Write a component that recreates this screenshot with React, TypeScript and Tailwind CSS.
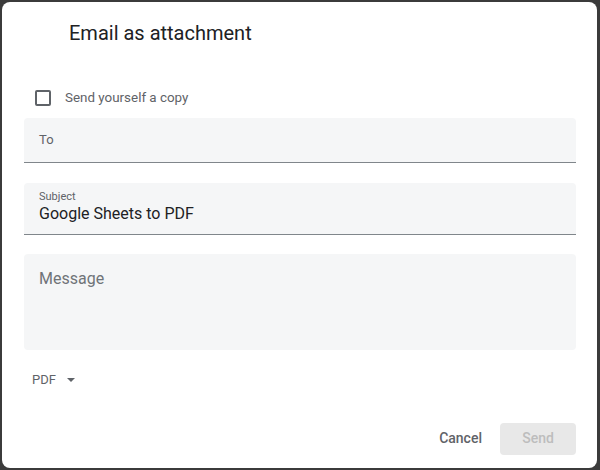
export default function App() {
  return (
    <div
      className="w-[600px] h-[470px] bg-[#3b3b3b] pt-[2px] pl-[2px] pr-[3px] pb-[2px]"
      style={{ fontFamily: "Roboto, 'Liberation Sans', sans-serif" }}
    >
      <div className="h-full bg-white rounded-[8px] pl-[22px] pr-[21px] flex flex-col">
        {/* Title */}
        <h2 className="mt-[19px] ml-[45px] text-[20px] leading-[24px] text-[#202124]">
          Email as attachment
        </h2>

        {/* Copy checkbox */}
        <label className="mt-[43px] ml-[11px] h-[20px] flex items-center gap-[14px]">
          <span className="w-[16px] h-[16px] border-2 border-[#5f6368] rounded-[2px]" />
          <span className="text-[13.4px] text-[#5f6368]">Send yourself a copy</span>
        </label>

        {/* To */}
        <div className="mt-[10px] h-[45px] bg-[#f5f6f7] rounded-t-[4px] border-b border-[#80868b] flex items-center px-[15px]">
          <span className="text-[13px] text-[#5f6368]">To</span>
        </div>

        {/* Subject */}
        <div className="mt-[20px] h-[52px] bg-[#f5f6f7] rounded-t-[4px] border-b border-[#80868b] px-[15px] pt-[7px]">
          <div className="text-[11px] leading-[14px] text-[#5f6368]">Subject</div>
          <div className="text-[16px] leading-[20px] text-[#202124]">Google Sheets to PDF</div>
        </div>

        {/* Message */}
        <div className="mt-[19px] h-[96px] bg-[#f5f6f7] rounded-[4px] px-[15px] pt-[13px]">
          <span className="text-[16px] leading-[20px] text-[#6f7378]">Message</span>
        </div>

        {/* Format */}
        <div className="mt-[20px] ml-[8px] h-[20px] flex items-center gap-[11px]">
          <span className="text-[13px] text-[#5f6368]">PDF</span>
          <svg width="8" height="4" viewBox="0 0 8 4">
            <path d="M0 0 L8 0 L4 4 Z" fill="#5f6368" />
          </svg>
        </div>

        {/* Actions */}
        <div className="mt-[33px] flex justify-end items-center gap-[2px]">
          <button className="h-[32px] px-[16px] pb-[2px] text-[14px] font-medium text-[#5f6368] rounded-[4px]">
            Cancel
          </button>
          <button
            disabled
            className="h-[32px] w-[76px] pb-[2px] bg-[#e8e8e8] text-[14px] font-medium text-[#bdbdbd] rounded-[4px]"
          >
            Send
          </button>
        </div>
      </div>
    </div>
  );
}
